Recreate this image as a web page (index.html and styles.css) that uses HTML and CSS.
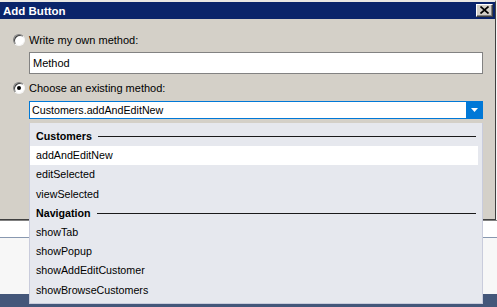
FILE: index.html
```html
<!DOCTYPE html>
<html>
<head>
  <meta charset="utf-8">
  <title>Add Button</title>
  <link rel="stylesheet" href="styles.css">
</head>
<body>
  <div class="dialog">
    <div class="titlebar">
      <span class="title">Add Button</span>
      <div class="close-btn">
        <svg width="9" height="8" viewBox="0 0 9 8"><path d="M0.5 0.5 L8.5 7.5 M8.5 0.5 L0.5 7.5" stroke="#000" stroke-width="1.7" fill="none"/></svg>
      </div>
    </div>

    <div class="dialog-body">
      <div class="option">
        <span class="radio"></span>
        <label>Write my own method:</label>
      </div>
      <div class="text-field">Method</div>

      <div class="option option-second">
        <span class="radio checked"></span>
        <label>Choose an existing method:</label>
      </div>
      <div class="combo">
        <span class="combo-value">Customers.addAndEditNew</span>
        <span class="combo-btn">
          <svg width="7" height="4" viewBox="0 0 7 4"><path d="M0 0 H7 L3.5 4 Z" fill="#fff"/></svg>
        </span>
      </div>
    </div>
  </div>

  <div class="behind">
    <div class="behind-strip"></div>
    <div class="behind-content"></div>
    <div class="behind-footer"></div>
  </div>

  <!-- open dropdown of the combo box -->
  <div class="dropdown">
    <div class="group">Customers<span class="rule"></span></div>
    <div class="item selected">addAndEditNew</div>
    <div class="item">editSelected</div>
    <div class="item">viewSelected</div>
    <div class="group">Navigation<span class="rule"></span></div>
    <div class="item">showTab</div>
    <div class="item">showPopup</div>
    <div class="item">showAddEditCustomer</div>
    <div class="item">showBrowseCustomers</div>
  </div>
</body>
</html>
```

FILE: styles.css
```css
body {
  font-family: "Liberation Sans", Arial, sans-serif;
  font-size: 11px;
  color: #000;
  background-color: #f5f5f5;
  margin: 0;
  width: 497px;
  height: 307px;
  overflow: hidden;
  position: relative;
  display: flex;
  flex-direction: column;
}

.dialog {
  width: 496px;
  height: 220px;
  box-sizing: border-box;
  background-color: #d4d0c8;
  border-top: 2px solid #e9e7e3;
  border-right: 1px solid #404040;
  border-bottom: 1px solid #404040;
  flex-shrink: 0;
}

.titlebar {
  height: 17px;
  background-color: #0a246a;
  display: flex;
  align-items: center;
  justify-content: space-between;
  padding: 0 2px 0 3px;
}

.title {
  color: #fff;
  font-weight: bold;
  font-size: 11.5px;
}

.close-btn {
  width: 17px;
  height: 13px;
  box-sizing: border-box;
  background-color: #d4d0c8;
  border: 1px solid;
  border-color: #fff #404040 #404040 #fff;
  box-shadow: inset -1px -1px 0 #808080;
  display: flex;
  align-items: center;
  justify-content: center;
}

.close-btn svg {
  margin: 0 1px 1px 0;
}

.dialog-body {
  padding: 15px 13px 0 13px;
}

.option {
  display: flex;
  align-items: center;
  gap: 4px;
  height: 12px;
}

.option-second {
  margin-top: 8px;
}

.radio {
  width: 12px;
  height: 12px;
  box-sizing: border-box;
  border-radius: 50%;
  background-color: #fff;
  border: 1px solid;
  border-color: #808080 #f4f4f4 #f4f4f4 #808080;
  box-shadow: inset 1px 1px 0 #404040;
  position: relative;
}

.radio.checked::after {
  content: "";
  position: absolute;
  left: 3px;
  top: 3px;
  width: 4px;
  height: 4px;
  border-radius: 50%;
  background-color: #000;
}

.text-field {
  margin: 6px 0 0 16px;
  width: 454px;
  height: 22px;
  box-sizing: border-box;
  background-color: #fff;
  border: 1px solid #828282;
  padding-left: 3px;
  line-height: 20px;
}

.combo {
  margin: 7px 0 0 16px;
  width: 454px;
  height: 18px;
  box-sizing: border-box;
  background-color: #fff;
  border: 1px solid #0078d7;
  display: flex;
  align-items: center;
}

.combo-value {
  flex: 1;
  padding-left: 2px;
  font-size: 10.7px;
}

.combo-btn {
  width: 17px;
  height: 18px;
  margin-right: -1px;
  background-color: #0078d7;
  display: flex;
  align-items: center;
  justify-content: center;
}

.behind {
  flex: 1;
  display: flex;
  flex-direction: column;
}

.behind-strip {
  height: 16px;
  background-color: #fff;
  border-top: 1px solid #808080;
  border-bottom: 1px solid #8898b0;
}

.behind-content {
  flex: 1;
  background-color: #f7f7f7;
}

.behind-footer {
  height: 13px;
  background-color: #44577a;
}

.dropdown {
  position: absolute;
  left: 29px;
  top: 123px;
  width: 454px;
  height: 181px;
  box-sizing: border-box;
  background-color: #e6e8ee;
  border: 1px solid #c9ccdc;
  border-top: none;
  padding: 4px 4px 0 0;
  font-size: 10.7px;
}

.group,
.item {
  height: 19.2px;
  line-height: 19.2px;
  padding-left: 6px;
}

.group {
  font-weight: bold;
  display: flex;
  align-items: center;
  padding-right: 2px;
}

.rule {
  flex: 1;
  height: 1px;
  margin-left: 6px;
  background-color: #1a1a1a;
}

.item.selected {
  background-color: #fff;
}
```
